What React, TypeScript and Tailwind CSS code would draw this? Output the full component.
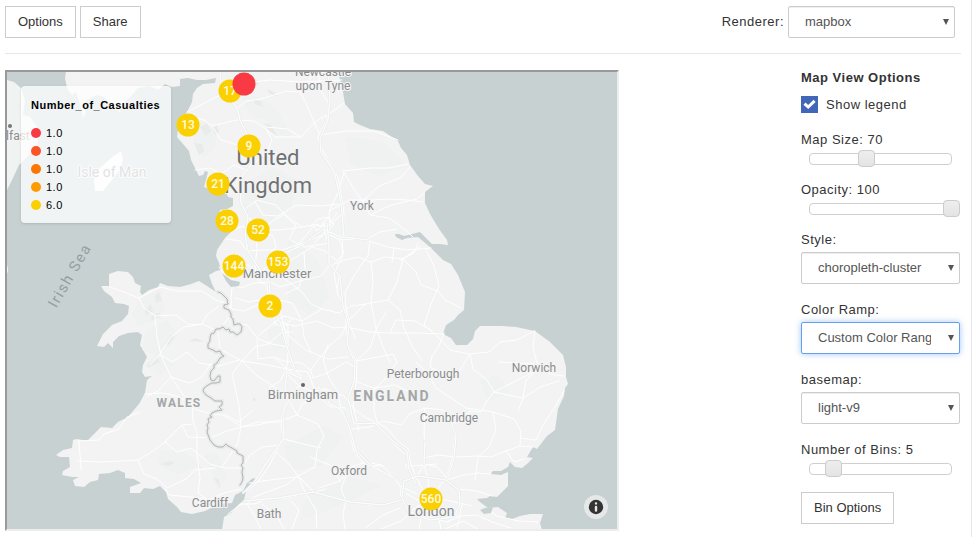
import { useState } from "react";
import type { ReactNode } from "react";

const LAND =
  "M66 72 L65 78 L67 88 L72 95 L76 92 L78 98 L81 108 L83 118 L86 112 L82 104 L90 98 L97 95 L104 97 L112 107 L120 112 L122 104 L130 97 L138 88 L150 86 L158 90 L165 84 L172 87 L180 86 L180 79 L188 78 L197 80 L206 80 L216 78 L215 83 L203 84 L197 88 L193 94 L192 102 L187 112 L181 119 L178 130 L177 137 L183 144 L189 151 L191 160 L195 168 L199 176 L203 175 L205 171 L208 172 L206 180 L204 187 L210 189 L213 192 L220 194 L226 192 L228 197 L233 198 L233 206 L227 209 L220 210 L219 217 L224 228 L232 231 L225 238 L217 250 L216 256 L219 263 L221 270 L216 271 L209 275 L212 284 L216 292 L210 288 L199 281 L191 284 L180 287 L168 286 L160 283 L158 287 L149 290 L142 295 L140 292 L141 286 L135 283 L133 277 L128 272 L118 271 L109 274 L109 286 L101 286 L104 291 L112 297 L115 303 L124 304 L129 306 L128 314 L122 321 L112 325 L103 334 L97 346 L104 347 L108 343 L113 348 L113 342 L119 336 L128 333 L138 332 L142 335 L140 345 L147 357 L143 365 L142 372 L145 377 L152 376 L147 380 L145 393 L139 404 L128 417 L118 422 L112 428 L101 427 L94 434 L87 441 L77 439 L73 440 L72 448 L63 450 L56 455 L60 457 L69 457 L70 467 L63 471 L62 475 L72 477 L79 477 L73 480 L75 486 L84 487 L90 482 L98 480 L99 474 L110 473 L118 470 L125 473 L125 478 L134 479 L141 483 L130 487 L130 493 L140 493 L144 488 L153 489 L160 486 L166 492 L168 499 L177 507 L181 512 L192 514 L205 511 L213 507 L221 504 L232 503 L235 495 L243 491 L247 483 L253 478 L256 479 L252 486 L246 491 L244 500 L238 505 L231 513 L224 517 L222 530 L542 530 L540 523 L543 514 L530 514 L520 516 L512 519 L505 518 L507 513 L498 507 L488 508 L480 502 L477 499 L487 498 L490 496 L497 497 L508 486 L508 472 L501 475 L491 474 L493 471 L501 471 L508 467 L510 462 L515 467 L522 468 L528 463 L533 458 L527 457 L533 447 L537 449 L547 436 L555 430 L558 409 L564 396 L565 388 L568 384 L566 377 L566 367 L563 355 L556 348 L550 342 L535 331 L516 327 L502 326 L480 326 L475 331 L473 339 L467 345 L456 345 L451 338 L443 334 L446 325 L454 320 L458 315 L464 310 L465 292 L458 275 L451 264 L443 260 L430 247 L418 237 L407 238 L402 240 L396 237 L395 234 L399 234 L404 236 L420 232 L432 244 L440 244 L448 245 L447 240 L439 229 L430 214 L425 203 L425 192 L433 186 L425 184 L418 176 L410 165 L407 155 L401 148 L398 141 L383 131 L370 129 L360 125 L354 122 L353 113 L345 104 L343 92 L338 72 Z";

const IRELAND =
  "M7 80 L14 82 L21 88 L25 100 L23 115 L30 117 L37 126 L38 142 L34 150 L26 158 L19 165 L12 180 L7 190 Z M7 265 L8 268 L8 272 L7 273 Z";

const INLETS =
  "M222 273 L231 280 L240 282 L239 286 L231 287 L226 281 Z M480 510 L485 508 L493 507 L491 513 L484 514 Z";

const HILLS = [
  "M192 126 L203 122 L216 128 L215 147 L204 157 L195 145 Z",
  "M241 98 L258 96 L278 112 L291 137 L282 135 L263 119 L254 118 Z",
  "M244 184 L274 168 L298 180 L291 208 L260 226 L244 211 Z",
  "M288 236 L317 259 L330 298 L309 315 L288 299 Z",
  "M346 137 L382 142 L399 157 L406 166 L378 176 L350 163 Z",
  "M143 297 L160 290 L165 308 L156 320 L137 326 L132 314 Z",
  "M147 330 L167 320 L178 337 L158 356 L142 350 Z",
  "M145 365 L160 352 L174 365 L159 375 Z",
  "M162 450 L184 452 L200 465 L178 474 L157 464 Z",
  "M205 455 L216 452 L228 477 L218 490 Z",
  "M284 446 L325 426 L342 437 L322 465 L291 470 Z",
  "M308 493 L350 477 L380 486 L348 502 L300 520 Z",
  "M268 330 L290 322 L293 342 L274 352 Z",
  "M480 380 L498 376 L510 393 L489 401 Z",
];

const RIDGES = [
  "M200 127 l7 -3 4 7 -5 5z M212 127 l5 -2 2 8 -4 2z M253 99 l8 2 2 6 -8 -3z M264 123 l7 2 7 11 -9 -5z",
  "M248 82 l8 -3 3 5 -7 4z M267 89 l7 3 4 5 -8 -3z M194 143 l8 1 2 7 -5 4z",
  "M145 310 l6 -6 2 7 -7 5z M155 296 l4 -4 3 8 -6 3z M151 316 l8 -3 2 4 -9 3z",
  "M188 341 l8 -3 8 4z M147 365 l10 -7 3 4 -12 6z M171 335 l3 2 -5 8 -4 -1z",
  "M160 464 l9 -3 6 2 -7 3z M213 477 l6 3 1 8z M253 397 l4 3 -4 1z M199 465 l3 4 -4 -2z",
];

const ROADS = [
  "M220 72 L221 86 L230 99 L237 108 L240 120 L247 134 L250 152 L252 164 L243 175 L240 185 L241 203 L248 217 L256 230 L257 250 L255 266",
  "M187 112 L203 104 L220 95 L235 84 L270 80 L302 82 L342 80",
  "M184 115 L204 120 L212 126 L236 120 L254 121 L266 129 L275 137 L301 137 L311 126 L318 120 L332 112 L344 103",
  "M195 170 L210 168 L221 174 L234 165 L248 171 M212 126 L221 140 L241 146 L250 147",
  "M237 109 L246 101 L261 99 L286 91 L300 92 L311 78 L307 72",
  "M300 92 L307 105 L314 122 L320 135 L346 131 L374 131 L398 140",
  "M318 72 L321 91 L329 104 L326 122 L318 136 L320 146 L329 161 L338 178 L341 195 L344 212 L343 235 L342 257 L334 274 L337 289",
  "M266 129 L272 139 L268 151 L257 161 L247 169 M301 137 L288 129 L266 127",
  "M343 171 L370 168 L389 168 L408 164 M344 173 L337 195 L329 211 L330 225 L321 237 L314 243",
  "M343 171 L355 191 L363 201 L370 215 L389 218 L403 228 L413 237",
  "M363 201 L379 186 L400 178 L410 167 M370 215 L391 205 L417 199 L425 192",
  "M329 211 L350 200 L372 200 L389 199 L407 200 L423 202",
  "M344 212 L330 225 L314 226 L303 239 L292 251 L279 258 L264 269",
  "M244 210 L257 200 L276 205 L288 218 L302 227 L318 224 L325 233 L339 239 L365 240 L380 232 L397 229",
  "M255 202 L263 215 L278 216 L296 205 L320 206 L342 204",
  "M248 217 L264 228 L274 220 L285 214 L296 226 L289 239 L304 247 L329 243",
  "M233 231 L243 226 L250 233 L258 230 L273 236 L276 247 L267 257 L277 263",
  "M226 239 L240 241 L247 251 L264 250 L282 250 L303 243 L323 235",
  "M221 267 L231 263 L248 265 L261 274 L277 273 L290 261 L304 252",
  "M219 267 L229 281 L241 288 L254 283 L270 282 L280 287 L300 281 L321 276",
  "M255 266 L257 279 L267 286 L270 305 L278 319 L288 326 L288 350 L293 367 L303 379",
  "M277 263 L285 279 L302 292 L311 304 L322 309 L339 313 L351 306 L366 304",
  "M257 230 L280 230 L302 227 M321 276 L329 266 L345 260 L358 257 L371 262 L385 257 L403 259 L420 247",
  "M339 239 L344 253 L337 261 L325 251 L312 247 L304 252 L305 270 L299 287 L285 294",
  "M370 240 L368 256 L361 265 L352 279 L345 293 L346 308 L350 325 L355 338",
  "M371 262 L373 281 L371 302 L376 328 L383 347 L390 362",
  "M403 259 L397 282 L388 300 L400 310 L404 328 L412 346 L422 361",
  "M403 259 L416 272 L421 285 L438 291 L445 300 L461 308",
  "M388 300 L365 304 L350 319 L340 337 L330 345 L318 360 L310 371",
  "M425 248 L434 266 L439 286 L431 304 L424 325 L437 336 L450 350 L469 354",
  "M365 240 L388 247 L407 250 L431 248 M392 262 L394 248 M400 260 L414 253 L418 243",
  "M325 233 L329 246 L329 263 L339 276 L337 293 L346 309 L346 327 L348 344 L357 363 L356 383 L353 405 L359 431",
  "M281 323 L296 326 L316 321 L334 328 L346 327 L370 332 L390 333 L417 333 L444 334",
  "M258 336 L274 323 L284 316 L302 321 L322 309 M230 322 L247 325 L258 339 L272 344 L288 347",
  "M235 298 L249 302 L263 299 L270 311 L278 319 L291 338 L306 350 L328 359 L348 357",
  "M216 292 L229 301 L231 315 L218 331 L220 349 L233 356 L242 361 L262 364 L287 369 L302 379",
  "M233 278 L231 298 L231 309 L244 311 L260 304 L278 300 L292 303 L302 321 L304 337 L311 352",
  "M242 361 L232 374 L235 387 L239 405 L241 427 L238 443 L230 455 L222 467",
  "M242 361 L255 347 L268 344 L281 333 L293 332 M242 361 L257 376 L273 386 L289 400 L297 415",
  "M218 331 L202 324 L184 327 L171 337 L160 354 L150 365 M202 324 L207 315 L219 306",
  "M110 287 L121 291 L139 298 L160 287 L177 291 L202 291 L216 300 L228 304",
  "M139 298 L144 308 L155 316 L157 337 L161 355 L172 362 L187 352 L199 363 L219 366 L239 360",
  "M155 316 L176 315 L189 325 L202 324 M161 355 L171 377 L158 391 L148 396 M171 377 L189 383 L202 377 L211 363",
  "M145 394 L163 393 L176 396 L192 403 L193 420 L197 434 L197 453 L210 464 L224 468 L242 468",
  "M171 377 L184 396 L194 409 L212 414 L223 415 L242 427 L257 425 L280 420",
  "M78 441 L99 440 L104 434 L119 429 L127 417 L140 412",
  "M78 461 L98 462 L121 461 L138 460 L150 453 L165 442 L182 425 L193 424",
  "M79 441 L80 455 L81 470 M138 460 L144 474 L157 479 L167 488 L186 479 L195 470 L215 468",
  "M165 442 L177 452 L191 448 L197 453 L200 478 L198 493 L208 500 L224 493 L241 489",
  "M165 488 L169 495 L191 497 L208 500 M182 425 L188 437 L210 438 L227 431 L242 427",
  "M280 310 L285 330 L288 355 L286 373 L299 386 L289 397 L283 410 L281 426 L284 439 L276 452 L269 466 L260 479 L247 491",
  "M257 340 L258 359 L274 357 L287 369 L280 381 L269 388 M287 369 L308 372 L314 388 L328 390",
  "M274 357 L283 361 L302 363 L311 371 L313 378 L327 373 L346 362 L356 368",
  "M299 386 L312 391 L325 389 L344 396 L354 409 L365 417 L387 428 L398 441 L408 449 L407 469",
  "M328 345 L323 360 L329 378 L338 392 L341 411 L349 429 L354 451 L365 465 L382 466",
  "M297 415 L302 404 L319 397 L331 407 L345 408 M297 415 L318 424 L324 436 L317 450 L315 467 L296 477 L270 480 L249 483",
  "M241 427 L258 422 L279 422 L297 415 M252 411 L239 422 L224 414",
  "M242 468 L250 455 L262 447 L280 445 L284 439 L303 444 L321 448 M276 452 L290 465 L298 476 L314 492 L326 489",
  "M298 476 L306 494 L316 510 L317 529 M298 476 L286 485 L267 492 L254 497 L247 504 L254 515 L261 529",
  "M241 504 L254 504 L270 498 L287 498 L314 492 L336 497 L350 502 L370 505 L389 504 L401 500",
  "M241 504 L228 514 M262 504 L277 516 L284 529 M292 529 L299 510 L291 501",
  "M319 488 L340 481 L351 467 L365 462 L382 465 L394 478 L400 486 L417 494",
  "M340 481 L332 466 L310 457 M345 529 L343 513 L346 501 L341 489 L347 473",
  "M351 429 L370 427 L383 421 L402 425 L409 414 L425 408 L443 410 L451 421",
  "M374 388 L374 409 L378 427 L391 441 L405 454 M356 368 L357 382 L374 388 L395 385 L412 393",
  "M356 361 L378 357 L393 354 L397 362 L387 377 L375 389 M390 333 L396 320 L415 321 L431 330",
  "M356 361 L370 348 L377 327 L387 311 M416 362 L428 374 L436 388 L451 398 L466 408",
  "M444 333 L439 346 L432 356 L430 367 L441 372 L459 372 L470 354 L489 352 L500 342 L517 340 L534 331",
  "M470 354 L473 369 L487 380 L494 392 L523 398 L540 387 L559 381",
  "M535 331 L533 347 L537 363 L550 374 L564 376 M499 362 L534 364 M537 370 L526 380 L523 398 L518 411",
  "M494 392 L487 401 L481 412 L470 411 L461 420 L451 424 M494 392 L516 381 L535 371",
  "M466 408 L493 412 L514 419 L521 431 L520 446 L533 447 M493 412 L496 430 L489 447 L478 457 L475 480",
  "M520 446 L503 452 L491 457 L477 456 L456 457 L438 455 L423 458",
  "M520 438 L536 440 L543 425 L555 407 L564 391 M506 451 L514 462 L524 459",
  "M425 408 L424 432 L425 447 L424 464 L427 475 L431 498",
  "M451 421 L455 435 L453 456 L447 476 L436 491 M408 449 L411 465 L417 479 L424 492",
  "M404 504 L400 493 L404 481 L417 476 L432 478 L446 480 L458 489 L460 503 L456 517 L447 522",
  "M404 504 L414 514 L430 517 L447 522 L461 516 L477 515 L492 522 L511 528",
  "M446 480 L464 475 L478 473 L490 474 M458 489 L477 491 L492 496",
  "M431 498 L417 500 L406 493 M431 498 L446 500 L460 503 L472 506 M431 498 L423 510 L419 529",
  "M431 498 L437 510 L441 529 M431 498 L414 509 L401 521 L381 529 M400 508 L383 515 L365 528",
  "M405 465 L411 466 L437 464 M424 464 L416 478 M424 464 L437 467 L447 478",
  "M486 508 L497 516 L519 521 L538 522 M445 529 L463 521 L478 529 M462 504 L457 529",
  "M284 316 L273 323 L283 327 L292 319 M277 318 L284 330 M329 217 L318 219 L310 227",
  "M323 222 L328 218 L334 224 L329 230 L323 226 Z M327 221 L317 231 L312 224 M337 213 L330 223",
];

const MOTORWAYS = [
  "M220 72 L221 86 L230 99 L237 108 L240 120 L247 134 L250 152 L252 164 L243 175 L240 185 L241 203 L248 217 L245 235 L248 251 L258 267 L269 281 L271 306 L280 322 L288 350 L295 369",
  "M328 72 L330 98 L328 119 L320 140 L321 152 L334 171 L338 188 L341 204 L343 225 L344 237 L369 240",
  "M343 238 L323 229 L304 244 L292 250 L276 255 M327 223 L329 246 L329 263 L340 276 L343 306 L349 325 L347 344 L355 363 L354 382 L348 398 L354 424 L375 423 L389 438 L407 451 L409 469 L416 484",
  "M302 379 L287 372 L285 386 L289 400 L283 412 L284 438 L271 456 L255 481 L243 493",
  "M244 501 L278 498 L313 492 L350 502 L383 505 L401 500",
  "M318 386 L330 404 L342 410 L350 429 L356 451 L372 466 L394 478",
  "M404 481 L418 476 L446 480 L459 490 L460 504 L454 517 L430 520 L408 511 L402 498 Z",
  "M451 421 L456 437 L454 458 L448 477 M425 441 L424 464",
];

const BORDER =
  "M218 292 l3 1 4 4 2 2 1 5 -4 1 0 3 5 2 2 4 0 3 2 2 1 6 3 -1 3 0 2 3 -1 5 -4 3 -4 -3 -3 0 -1 -3 -3 1 -3 -3 -4 2 -3 0 -2 4 -3 1 -1 4 0 3 -2 3 0 4 5 2 3 2 4 -1 2 4 2 1 -4 2 -3 5 -3 2 0 3 -3 3 -1 5 1 4 3 1 4 -5 2 0 0 6 -4 1 -4 0 -4 2 -4 3 -1 3 3 4 5 3 4 3 7 0 0 4 -3 2 3 3 -6 1 -4 2 -2 3 2 1 -4 2 1 3 -2 3 1 3 -1 4 3 8 4 5 4 2 5 0 3 -3 2 2 4 2 5 3 0 2 6 3 0 7 -2 2 2 3 -1 4 1 6 -1 4 -2 3";

const CLUSTERS = [
  { x: 230, y: 91, n: 17 },
  { x: 188, y: 125, n: 13 },
  { x: 249, y: 146, n: 9 },
  { x: 218, y: 184, n: 21 },
  { x: 227, y: 221, n: 28 },
  { x: 258, y: 230, n: 52 },
  { x: 234, y: 266, n: 144 },
  { x: 278, y: 262, n: 153 },
  { x: 270, y: 306, n: 2 },
  { x: 431, y: 499, n: 560 },
];

const CITIES = [
  { x: 323, y: 76, name: "Newcastle" },
  { x: 323, y: 90, name: "upon Tyne" },
  { x: 362, y: 210, name: "York" },
  { x: 423, y: 378, name: "Peterborough" },
  { x: 534, y: 372, name: "Norwich" },
  { x: 449, y: 422, name: "Cambridge" },
  { x: 349, y: 475, name: "Oxford" },
  { x: 210, y: 507, name: "Cardiff" },
  { x: 269, y: 518, name: "Bath" },
];

const BIG_CITIES = [
  { x: 277, y: 278, name: "Manchester" },
  { x: 303, y: 399, name: "Birmingham" },
];

const LEGEND = [
  { color: "bg-[#f93943]", value: "1.0" },
  { color: "bg-[#fb5526]", value: "1.0" },
  { color: "bg-[#fd7600]", value: "1.0" },
  { color: "bg-[#fe9b00]", value: "1.0" },
  { color: "bg-[#fbd000]", value: "6.0" },
];

function BaseMap() {
  return (
    <svg
      viewBox="7 72 610 457"
      preserveAspectRatio="xMidYMid slice"
      className="block h-full w-full font-[Roboto,'Liberation_Sans',sans-serif] tracking-normal"
      role="img"
      aria-label="Map of England and Wales"
    >
      <rect x="7" y="72" width="610" height="457" fill="#c8d1d2" />
      <path d={IRELAND} fill="#f1f2f2" />
      <path d={LAND} fill="#f2f3f2" />
      <path d="M94 180 L100 168 L111 158 L121 151 L123 160 L119 171 L111 181 L103 191 L95 191 Z" fill="#fafafa" />
      {HILLS.map((d) => (
        <path key={d} d={d} fill="#edf0f0" opacity="0.5" />
      ))}
      {RIDGES.map((d) => (
        <path key={d} d={d} fill="#e8ebea" />
      ))}
      <g fill="none" strokeLinejoin="round" strokeLinecap="round">
        {ROADS.map((d) => (
          <path key={d} d={d} stroke="#ffffff" strokeWidth="1" />
        ))}
        {MOTORWAYS.map((d) => (
          <path key={d} d={d} stroke="#e5e8e8" strokeWidth="2.4" />
        ))}
        {MOTORWAYS.map((d) => (
          <path key={d} d={d} stroke="#fbfcfc" strokeWidth="1.5" />
        ))}
        <path d={BORDER} stroke="#e9eaea" strokeWidth="4" />
        <path d={BORDER} stroke="#b2b3b3" strokeWidth="1" />
      </g>
      <path d={INLETS} fill="#c8d1d2" />

      <circle cx="10" cy="126" r="2" fill="#777777" />
      <circle cx="303" cy="385" r="2" fill="#666666" />
      <g textAnchor="middle" stroke="#f4f5f5" strokeWidth="2" strokeLinejoin="round" paintOrder="stroke" fill="#8b8c8d">
        <g fontSize="12">
          {CITIES.map((c) => (
            <text key={c.name} x={c.x} y={c.y}>
              {c.name}
            </text>
          ))}
          <text x="11" y="140">Belfast</text>
        </g>
        <g fontSize="13">
          {BIG_CITIES.map((c) => (
            <text key={c.name} x={c.x} y={c.y}>
              {c.name}
            </text>
          ))}
        </g>
        <text x="431" y="516" fontSize="14">London</text>
        <text x="112" y="177" fontSize="14">Isle of Man</text>
        <g fontWeight="700" fill="#a5a6a7">
          <text x="179" y="407" fontSize="12" className="tracking-widest">WALES</text>
          <text x="392" y="401" fontSize="14" className="tracking-[2px]">ENGLAND</text>
        </g>
        <g fontSize="22" fill="#707172">
          <text x="268" y="165">United</text>
          <text x="268" y="193">Kingdom</text>
        </g>
      </g>
      <text
        transform="translate(74 278) rotate(-60)"
        textAnchor="middle"
        fontSize="15"
        fill="#94a0a1"
        className="tracking-widest"
      >
        Irish Sea
      </text>

      {CLUSTERS.map((c) => (
        <g key={c.n}>
          <circle cx={c.x} cy={c.y} r="11.5" fill="#fbd000" />
          <text x={c.x} y={c.y + 4} textAnchor="middle" fontSize="12" fontWeight="500" fill="#fffbe0">
            {c.n}
          </text>
        </g>
      ))}
      <circle cx="244" cy="84" r="11.5" fill="#f93943" />
    </svg>
  );
}

function Legend() {
  return (
    <section className="absolute top-3.5 left-3.5 w-[150px] rounded-sm bg-white/75 px-2.5 pt-2.5 pb-[9px] text-[11px] text-black shadow-sm">
      <h2 className="mb-2.5 leading-[18px] font-bold whitespace-nowrap">Number_of_Casualties</h2>
      <ul>
        {LEGEND.map((item) => (
          <li key={item.color} className="flex h-[18px] items-center gap-[5px]">
            <span className={`size-2.5 rounded-full ${item.color}`} />
            {item.value}
          </li>
        ))}
      </ul>
    </section>
  );
}

function Button({ children }: { children: ReactNode }) {
  return (
    <button type="button" className="h-8 border border-[#cccccc] bg-white px-3 text-[13px] tracking-normal text-[#333333]">
      {children}
    </button>
  );
}

function Select({ id, options, focused = false }: { id: string; options: string[]; focused?: boolean }) {
  const [value, setValue] = useState(options[0]);
  return (
    <div className="relative w-full text-[#555555]">
      <select
        id={id}
        value={value}
        onChange={(e) => setValue(e.target.value)}
        className={`block h-8 w-full appearance-none rounded-xs border bg-white pr-7 pl-4 text-[13px] tracking-normal outline-none ${
          focused
            ? "border-[#66a0ee] shadow-[0_0_6px_rgba(102,160,238,0.6)]"
            : "border-[#cccccc] shadow-[inset_0_1px_1px_rgba(0,0,0,0.075)]"
        }`}
      >
        {options.map((o) => (
          <option key={o}>{o}</option>
        ))}
      </select>
      <svg viewBox="0 0 6 6" className="pointer-events-none absolute top-[13px] right-1.5 size-1.5" aria-hidden="true">
        <path d="M0 0 H6 L3 6 Z" fill="currentColor" />
      </svg>
    </div>
  );
}

function SelectField({ id, label, options, focused }: { id: string; label: string; options: string[]; focused?: boolean }) {
  return (
    <div className="flex flex-col gap-0.5 pb-4">
      <label htmlFor={id} className="leading-5">
        {label}
      </label>
      <Select id={id} options={options} focused={focused} />
    </div>
  );
}

function SliderField({ id, label, min, max, initial }: { id: string; label: string; min: number; max: number; initial: number }) {
  const [value, setValue] = useState(initial);
  return (
    <div className="flex flex-col pb-[13px]">
      <label htmlFor={id} className="leading-5">
        {label}: {value}
      </label>
      <div className="relative h-[17px]">
        <div className="absolute inset-x-2 top-[3px] h-3 rounded-[4px] border border-[#cfcfcf] bg-white" />
        <input
          id={id}
          type="range"
          min={min}
          max={max}
          value={value}
          onChange={(e) => setValue(Number(e.target.value))}
          className="relative block h-[17px] w-full appearance-none bg-transparent [&::-webkit-slider-thumb]:size-[17px] [&::-webkit-slider-thumb]:appearance-none [&::-webkit-slider-thumb]:rounded-[4px] [&::-webkit-slider-thumb]:border [&::-webkit-slider-thumb]:border-[#cccccc] [&::-webkit-slider-thumb]:bg-linear-to-b [&::-webkit-slider-thumb]:from-[#eeeeee] [&::-webkit-slider-thumb]:to-[#e4e4e4]"
        />
      </div>
    </div>
  );
}

export default function App() {
  const [legend, setLegend] = useState(true);
  return (
    <div className="min-h-screen border-r border-[#e7e7e7] bg-white pt-1.5 pr-2.5 pl-[5px] font-['Liberation_Sans',Arial,sans-serif] text-[13px] tracking-[0.5px] text-[#333333]">
      <header className="flex items-center justify-between border-b border-[#e7e7e7] pr-1.5 pb-[15px]">
        <div className="flex gap-1">
          <Button>Options</Button>
          <Button>Share</Button>
        </div>
        <div className="flex items-center gap-1">
          <label htmlFor="renderer">Renderer:</label>
          <div className="w-[167px]">
            <Select id="renderer" options={["mapbox", "bokeh", "matplotlib", "seaborn"]} />
          </div>
        </div>
      </header>

      <div className="flex justify-between gap-6 pr-px">
        <main className="min-w-0 flex-1 pt-4">
          <div className="relative aspect-[614/461] w-full max-w-[614px] overflow-hidden border-2 border-t-[#999999] border-r-[#ededed] border-b-[#ededed] border-l-[#999999]">
            <BaseMap />
            {legend && <Legend />}
            <button
              type="button"
              aria-label="Map attribution"
              className="absolute right-[9px] bottom-2.5 flex size-6 items-center justify-center rounded-full bg-white/50"
            >
              <svg viewBox="0 0 20 20" className="size-5" aria-hidden="true">
                <path
                  fill="#333333"
                  fillRule="evenodd"
                  d="M4 10a6 6 0 1 0 12 0 6 6 0 1 0-12 0m5-3a1 1 0 1 0 2 0 1 1 0 1 0-2 0m0 3a1 1 0 1 1 2 0v3a1 1 0 1 1-2 0"
                  transform="translate(-2 -2) scale(1.2)"
                />
              </svg>
            </button>
          </div>
        </main>

        <aside className="w-[159px] shrink-0 pt-3.5">
          <h1 className="mb-2 leading-5 font-bold whitespace-nowrap">Map View Options</h1>
          <label className="mb-[17px] flex h-[17px] items-center gap-2">
            <span className="relative size-[17px]">
              <input
                type="checkbox"
                checked={legend}
                onChange={(e) => setLegend(e.target.checked)}
                className="peer block size-[17px] appearance-none border border-[#cccccc] bg-white checked:border-[#4267b8] checked:bg-[#4267b8]"
              />
              <svg
                viewBox="0 0 17 17"
                className="pointer-events-none absolute inset-0 hidden peer-checked:block"
                aria-hidden="true"
              >
                <path d="M3.5 7.6 L7.2 11 L13.6 4.8" fill="none" stroke="#ffffff" strokeWidth="3" />
              </svg>
            </span>
            Show legend
          </label>
          <SliderField id="map-size" label="Map Size" min={50} max={100} initial={70} />
          <SliderField id="opacity" label="Opacity" min={0} max={100} initial={100} />
          <SelectField id="style" label="Style:" options={["choropleth-cluster", "simple", "simple-cluster", "choropleth"]} />
          <SelectField
            id="color-ramp"
            label="Color Ramp:"
            options={["Custom Color Range", "Light to Dark Red", "Yellow to Blue"]}
            focused
          />
          <SelectField id="basemap" label="basemap:" options={["light-v9", "satellite-v9", "dark-v9", "outdoors-v9"]} />
          <SliderField id="bins" label="Number of Bins" min={2} max={20} initial={5} />
          <div className="pt-0.5">
            <Button>Bin Options</Button>
          </div>
        </aside>
      </div>
    </div>
  );
}
